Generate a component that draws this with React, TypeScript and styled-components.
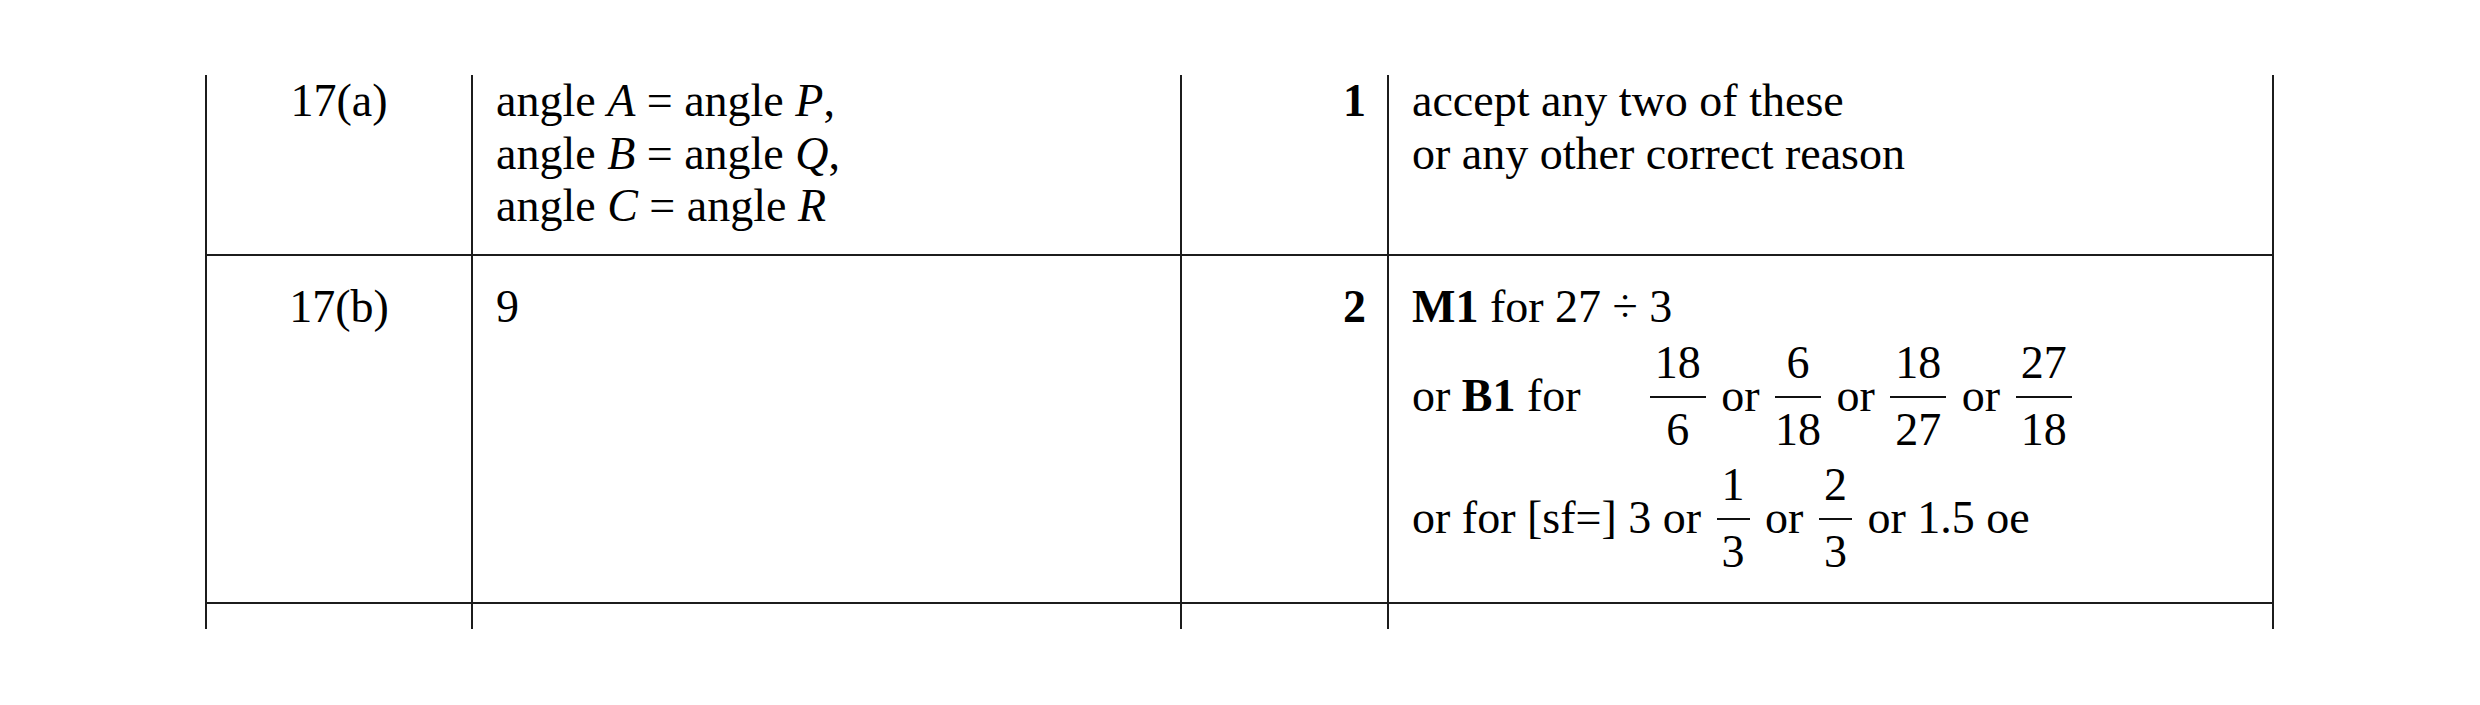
import React from "react";
import styled, { createGlobalStyle } from "styled-components";

const GlobalStyle = createGlobalStyle`
  html, body {
    margin: 0;
    padding: 0;
    background: #ffffff;
  }
  body {
    font-family: "Liberation Serif", "Times New Roman", serif;
    color: #000000;
  }
`;

const Page = styled.div`
  width: 2480px;
  height: 705px;
  box-sizing: border-box;
  padding: 75px 0 0 205px;
  background: #ffffff;
`;

const Table = styled.div`
  display: flex;
  flex-direction: column;
  width: 2069px;
  font-size: 46px;
  line-height: 52.5px;
`;

interface RowProps {
  $height: number;
  $open?: boolean;
}
const Row = styled.div<RowProps>`
  display: grid;
  grid-template-columns: 266px 709px 207px 887px;
  height: ${(p) => p.$height}px;
  box-sizing: border-box;
  border-bottom: ${(p) => (p.$open ? "none" : "2px solid #1c1c1c")};
`;

interface CellProps {
  $top?: number;
  $align?: "left" | "center" | "right";
  $last?: boolean;
  $bold?: boolean;
}
const Cell = styled.div<CellProps>`
  box-sizing: border-box;
  border-left: 2px solid #1c1c1c;
  border-right: ${(p) => (p.$last ? "2px solid #1c1c1c" : "none")};
  padding-top: ${(p) => p.$top ?? 0}px;
  padding-left: ${(p) => (p.$align === "center" ? 0 : 23)}px;
  padding-right: ${(p) => (p.$align === "right" ? 21 : p.$align === "center" ? 0 : 23)}px;
  text-align: ${(p) => p.$align ?? "left"};
  font-weight: ${(p) => (p.$bold ? 700 : 400)};
  white-space: nowrap;
`;

const Line = styled.div<{ $gap?: number }>`
  margin-top: ${(p) => p.$gap ?? 0}px;
`;

const Var = styled.i`
  font-style: italic;
`;

const Bold = styled.b`
  font-weight: 700;
`;

const Tab = styled.span<{ $width: number }>`
  display: inline-block;
  width: ${(p) => p.$width}px;
`;

const Frac = styled.span`
  display: inline-block;
  vertical-align: -34px;
  margin: 0 4px;
  text-align: center;
`;

const Num = styled.span`
  display: block;
  line-height: 46px;
  padding: 0 5px 10px;
  border-bottom: 2px solid #111111;
`;

const Den = styled.span`
  display: block;
  line-height: 46px;
  padding-top: 9px;
`;

const Fraction = ({ n, d }: { n: string; d: string }) => (
  <Frac>
    <Num>{n}</Num>
    <Den>{d}</Den>
  </Frac>
);

export default function App() {
  return (
    <>
      <GlobalStyle />
      <Page>
        <Table>
          <Row $height={181}>
            <Cell $align="center">17(a)</Cell>
            <Cell>
              <Line>
                angle <Var>A</Var> = angle <Var>P</Var>,
              </Line>
              <Line>
                angle <Var>B</Var> = angle <Var>Q</Var>,
              </Line>
              <Line>
                angle <Var>C</Var> = angle <Var>R</Var>
              </Line>
            </Cell>
            <Cell $align="right" $bold>
              1
            </Cell>
            <Cell $last>
              <Line>accept any two of these</Line>
              <Line>or any other correct reason</Line>
            </Cell>
          </Row>
          <Row $height={348}>
            <Cell $align="center" $top={25}>
              17(b)
            </Cell>
            <Cell $top={25}>9</Cell>
            <Cell $align="right" $bold $top={25}>
              2
            </Cell>
            <Cell $last $top={25}>
              <Line>
                <Bold>M1</Bold> for 27 ÷ 3
              </Line>
              <Line $gap={6}>
                or <Bold>B1</Bold> for
                <Tab $width={65} />
                <Fraction n="18" d="6" /> or <Fraction n="6" d="18" /> or{" "}
                <Fraction n="18" d="27" /> or <Fraction n="27" d="18" />
              </Line>
              <Line $gap={9}>
                or for [sf=] 3 or <Fraction n="1" d="3" /> or{" "}
                <Fraction n="2" d="3" /> or 1.5 oe
              </Line>
            </Cell>
          </Row>
          <Row $height={25} $open>
            <Cell />
            <Cell />
            <Cell />
            <Cell $last />
          </Row>
        </Table>
      </Page>
    </>
  );
}
